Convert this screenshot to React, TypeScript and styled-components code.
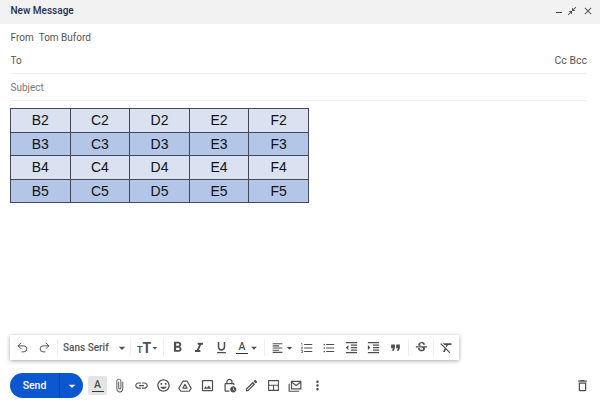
import React from 'react';
import styled, { createGlobalStyle } from 'styled-components';
import { Redo2, Undo2 } from 'lucide-react';
import {
  MdArrowDropDown,
  MdClose,
  MdCloseFullscreen,
  MdFormatAlignLeft,
  MdFormatBold,
  MdFormatClear,
  MdFormatIndentDecrease,
  MdFormatIndentIncrease,
  MdFormatItalic,
  MdFormatListBulleted,
  MdFormatListNumbered,
  MdFormatQuote,
  MdFormatUnderlined,
  MdLink,
  MdMoreVert,
  MdOutlineCreate,
  MdOutlineDelete,
  MdOutlineImage,
  MdOutlineInsertEmoticon,
  MdOutlineLockClock,
  MdStrikethroughS,
} from 'react-icons/md';

const GlobalStyle = createGlobalStyle`
  html, body {
    margin: 0;
    padding: 0;
    background: #fff;
  }
  * {
    box-sizing: border-box;
  }
`;

const rows = ['2', '3', '4', '5'];
const cols = ['B', 'C', 'D', 'E', 'F'];

const ClipIcon = () => (
  <svg width="15" height="15" viewBox="0 0 24 24" fill="currentColor">
    <path d="M16.5 6v11.5c0 2.21-1.79 4-4 4s-4-1.79-4-4V5c0-1.38 1.12-2.5 2.5-2.5s2.5 1.12 2.5 2.5v10.5c0 .55-.45 1-1 1s-1-.45-1-1V6H10v9.5c0 1.38 1.12 2.5 2.5 2.5s2.5-1.12 2.5-2.5V5c0-2.21-1.79-4-4-4S7 2.79 7 5v12.5c0 3.04 2.46 5.5 5.5 5.5s5.5-2.46 5.5-5.5V6h-1.5z" />
  </svg>
);

const DriveIcon = () => (
  <svg width="14" height="14" viewBox="0 0 24 24" fill="none" stroke="currentColor" strokeWidth="2" strokeLinejoin="round">
    <path d="M8.5 3.5h7L22.5 16l-3.3 5H4.8l-3.3-5z" />
    <path d="M12 9l3.5 6.5h-7z" />
  </svg>
);

const LayoutIcon = () => (
  <svg width="13" height="13" viewBox="0 0 24 24" fill="none" stroke="currentColor" strokeWidth="2">
    <path d="M3 3h18v18H3z" />
    <path d="M3 11.5h18M12 11.5V21" />
  </svg>
);

const TemplateIcon = () => (
  <svg width="14" height="14" viewBox="0 0 24 24" fill="none" stroke="currentColor" strokeWidth="2">
    <path d="M6 4h16v13H6z" />
    <path d="M6 5l8 6 8-6" />
    <path d="M2 8v13h17" />
  </svg>
);

const ColorIcon = () => (
  <ColorGlyph>
    A<ColorBar />
  </ColorGlyph>
);

const App = () => {
  return (
    <Compose>
      <GlobalStyle />
      <Header>
        <Title>New Message</Title>
        <WindowButtons>
          <MinimizeBar />
          <MdCloseFullscreen size={10} />
          <MdClose size={12} />
        </WindowButtons>
      </Header>
      <Fields>
        <FromRow>
          <span>From</span>
          <span>Tom Buford</span>
        </FromRow>
        <ToRow>
          <span>To</span>
          <CcBcc>Cc Bcc</CcBcc>
        </ToRow>
        <SubjectRow>Subject</SubjectRow>
      </Fields>
      <Body>
        <Sheet>
          <tbody>
            {rows.map((row, i) => (
              <tr key={row}>
                {cols.map((col) => (
                  <Cell key={col} $dark={i % 2 === 1}>
                    {col}
                    {row}
                  </Cell>
                ))}
              </tr>
            ))}
          </tbody>
        </Sheet>
      </Body>
      <FormatBar>
        <ToolGroup>
          <Tool $w={21.5}><Undo2 size={13} strokeWidth={1.8} /></Tool>
          <Tool $w={21.5}><Redo2 size={13} strokeWidth={1.8} /></Tool>
        </ToolGroup>
        <Divider />
        <FontPicker>
          <span>Sans Serif</span>
          <MdArrowDropDown size={16} />
        </FontPicker>
        <Divider />
        <SizePicker>
          <SizeSmall>T</SizeSmall>
          <SizeBig>T</SizeBig>
          <MdArrowDropDown size={14} />
        </SizePicker>
        <Divider />
        <ToolGroup>
          <Tool $w={22}><MdFormatBold size={17} /></Tool>
          <Tool $w={22}><MdFormatItalic size={16} /></Tool>
          <Tool $w={22}><MdFormatUnderlined size={15} /></Tool>
          <DropTool $w={30}>
            <ColorIcon />
            <MdArrowDropDown size={14} />
          </DropTool>
        </ToolGroup>
        <Divider />
        <ToolGroup>
          <DropTool $w={29}>
            <MdFormatAlignLeft size={14} />
            <MdArrowDropDown size={14} />
          </DropTool>
          <Tool $w={22}><MdFormatListNumbered size={14} /></Tool>
          <Tool $w={22}><MdFormatListBulleted size={14} /></Tool>
          <Tool $w={22}><MdFormatIndentDecrease size={15} /></Tool>
          <Tool $w={22}><MdFormatIndentIncrease size={15} /></Tool>
          <Tool $w={22}><MdFormatQuote size={15} /></Tool>
        </ToolGroup>
        <Divider />
        <Tool $w={20}><MdStrikethroughS size={15} /></Tool>
        <Divider />
        <Tool $w={20}><MdFormatClear size={15} /></Tool>
      </FormatBar>
      <Footer>
        <SendButton>
          <SendLabel>Send</SendLabel>
          <SendMore>
            <MdArrowDropDown size={16} />
          </SendMore>
        </SendButton>
        <FooterTools>
          <ColorToggle>
            <ColorIcon />
          </ColorToggle>
          <Tool $w={22}><ClipIcon /></Tool>
          <Tool $w={22}><MdLink size={15} /></Tool>
          <Tool $w={22}><MdOutlineInsertEmoticon size={15} /></Tool>
          <Tool $w={22}><DriveIcon /></Tool>
          <Tool $w={22}><MdOutlineImage size={15} /></Tool>
          <Tool $w={22}><MdOutlineLockClock size={15} /></Tool>
          <Tool $w={22}><MdOutlineCreate size={15} /></Tool>
          <Tool $w={22}><LayoutIcon /></Tool>
          <Tool $w={22}><TemplateIcon /></Tool>
          <Tool $w={22}><MdMoreVert size={15} /></Tool>
        </FooterTools>
        <TrashSlot>
          <MdOutlineDelete size={15} />
        </TrashSlot>
      </Footer>
    </Compose>
  );
};

export default App;

const Compose = styled.div`
  width: 600px;
  height: 406px;
  display: flex;
  flex-direction: column;
  background: #fff;
  overflow: hidden;
  font-family: Roboto, 'Liberation Sans', sans-serif;
  font-size: 10px;
  color: #444746;
`;

const Header = styled.div`
  height: 24px;
  flex: none;
  display: flex;
  align-items: center;
  justify-content: space-between;
  padding: 0 6px 3px 10.5px;
  background: #f2f2f2;
`;

const Title = styled.div`
  font-size: 10px;
  font-weight: 500;
  color: #1f2f55;
`;

const WindowButtons = styled.div`
  display: flex;
  align-items: center;
  gap: 5px;
  color: #555;
`;

const MinimizeBar = styled.div`
  width: 6px;
  height: 1.5px;
  margin-top: 4px;
  background: #444746;
`;

const Fields = styled.div`
  flex: none;
  padding: 0 13px 0 10.5px;
`;

const FromRow = styled.div`
  height: 27px;
  padding-bottom: 1px;
  display: flex;
  align-items: center;
  gap: 5px;
  color: #555;
`;

const ToRow = styled.div`
  height: 23px;
  padding-bottom: 4px;
  display: flex;
  align-items: center;
  justify-content: space-between;
  border-bottom: 1px solid #eceff1;
  color: #555;
`;

const CcBcc = styled.span`
  font-size: 10.5px;
`;

const SubjectRow = styled.div`
  height: 27px;
  display: flex;
  align-items: center;
  border-bottom: 1px solid #eceff1;
  color: #777;
`;

const Body = styled.div`
  flex: 1;
  padding: 7px 10px 0;
  min-height: 0;
`;

const Sheet = styled.table`
  width: 299px;
  height: 94px;
  border-collapse: collapse;
  table-layout: fixed;
  font-family: 'Liberation Sans', Arial, sans-serif;
  font-size: 14px;
  color: #111;
`;

const Cell = styled.td<{ $dark: boolean }>`
  padding: 0;
  height: 23.5px;
  text-align: center;
  border: 1px solid #44495a;
  background: ${({ $dark }) => ($dark ? '#b3c6e7' : '#dae1f1')};
`;

const FormatBar = styled.div`
  flex: none;
  width: 449px;
  height: 25px;
  margin: 0 0 13px 10px;
  padding: 0 1px 0 2px;
  display: flex;
  align-items: center;
  background: #fff;
  box-shadow: 0 1px 4px rgba(0, 0, 0, 0.35);
  border-radius: 1px;
`;

const ToolGroup = styled.div`
  display: flex;
  align-items: center;
`;

const Tool = styled.div<{ $w: number }>`
  width: ${({ $w }) => $w}px;
  height: 22px;
  flex: none;
  display: flex;
  align-items: center;
  justify-content: center;
  color: #4d5052;
`;

const DropTool = styled(Tool)`
  justify-content: flex-start;
  padding-left: 4px;
  svg:last-child {
    margin-left: -1px;
  }
`;

const Divider = styled.div`
  width: 1px;
  height: 17px;
  flex: none;
  margin: 0 2px;
  background: #eceff1;
`;

const FontPicker = styled.div`
  width: 68px;
  flex: none;
  padding: 0 0 0 3px;
  display: flex;
  align-items: center;
  justify-content: space-between;
  font-weight: 500;
  font-size: 10px;
  color: #555;
  svg {
    margin-right: -2px;
  }
`;

const SizePicker = styled.div`
  width: 28px;
  flex: none;
  padding-left: 4px;
  display: flex;
  align-items: baseline;
  color: #4d5052;
  font-weight: 700;
  svg {
    align-self: center;
    margin-left: -2px;
  }
`;

const SizeSmall = styled.span`
  font-size: 9px;
`;

const SizeBig = styled.span`
  font-size: 14px;
`;

const ColorGlyph = styled.div`
  position: relative;
  width: 12px;
  height: 14px;
  flex: none;
  font-size: 10.5px;
  line-height: 11px;
  font-weight: 500;
  text-align: center;
  color: #4d5052;
`;

const ColorBar = styled.div`
  height: 1.5px;
  margin-top: 1px;
  background: #333;
`;

const Footer = styled.div`
  flex: none;
  height: 33px;
  padding: 0 10px 8px;
  display: flex;
  align-items: center;
`;

const SendButton = styled.div`
  width: 73px;
  height: 25px;
  flex: none;
  display: flex;
  border-radius: 13px;
  overflow: hidden;
  background: #0b57d0;
  color: #fff;
`;

const SendLabel = styled.div`
  width: 50px;
  display: flex;
  align-items: center;
  justify-content: center;
  font-weight: 500;
  font-size: 10.5px;
  border-right: 1px solid #0a3f94;
`;

const SendMore = styled.div`
  flex: 1;
  display: flex;
  align-items: center;
  justify-content: center;
`;

const FooterTools = styled.div`
  margin-left: 5px;
  display: flex;
  align-items: center;
`;

const ColorToggle = styled.div`
  width: 19px;
  height: 19px;
  margin-right: 1px;
  display: flex;
  align-items: center;
  justify-content: center;
  border-radius: 2px;
  background: #e4e4e4;
`;

const TrashSlot = styled.div`
  margin-left: auto;
  display: flex;
  align-items: center;
  color: #4d5052;
`;
